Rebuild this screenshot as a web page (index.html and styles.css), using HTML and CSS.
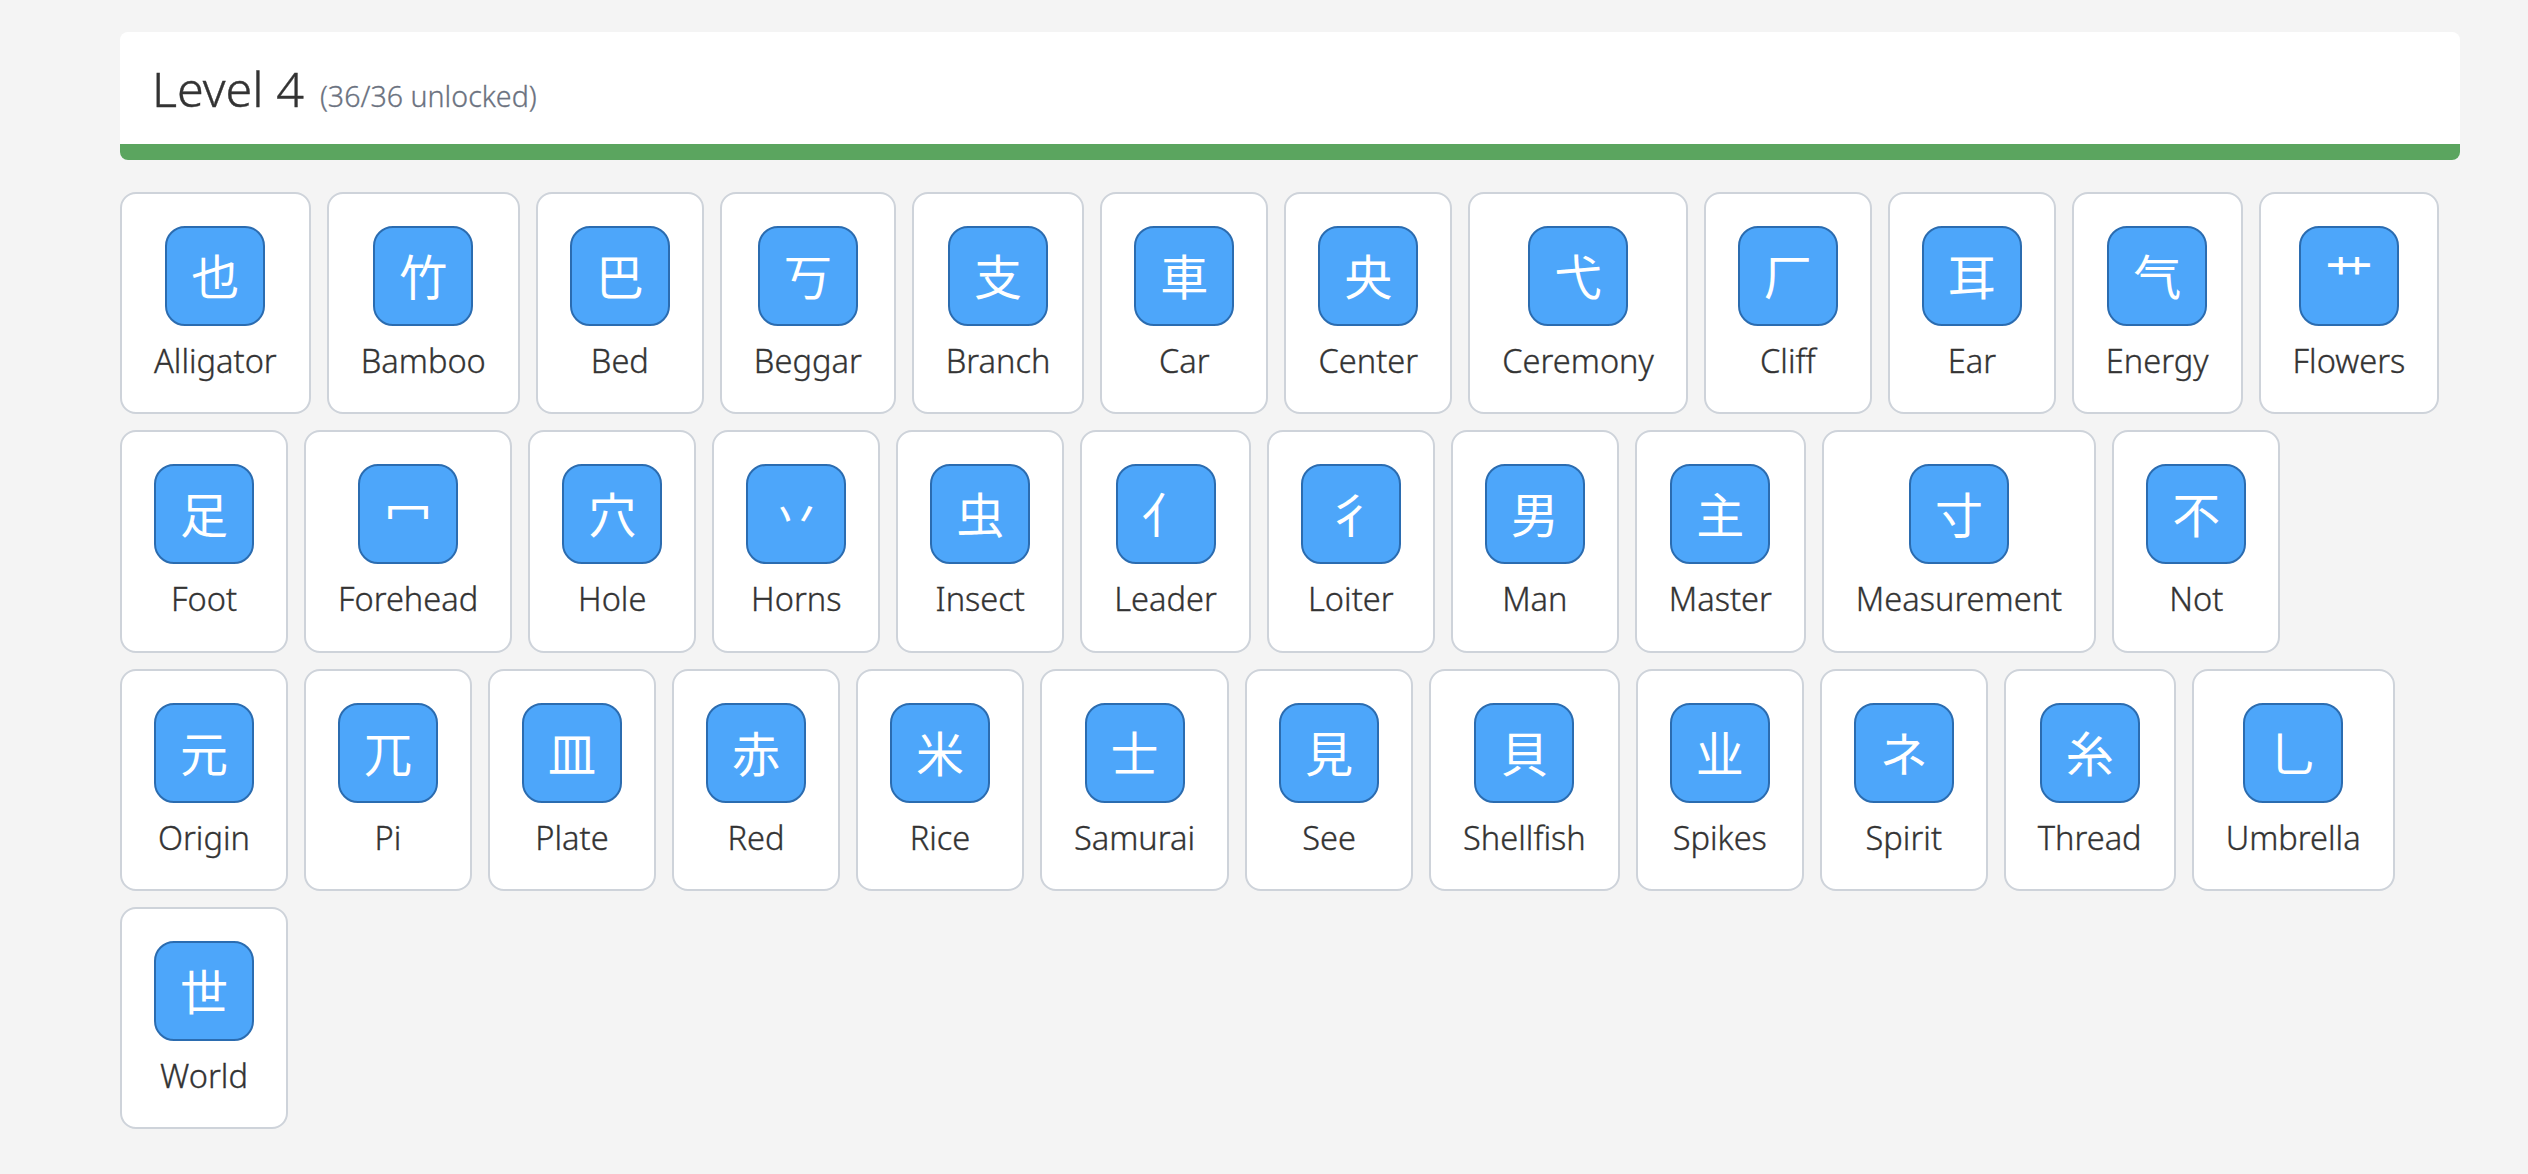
FILE: index.html
```
<!DOCTYPE html>
<html lang="ja">
<head>
<meta charset="utf-8">
<title>Level 4</title>
<link rel="stylesheet" href="styles.css">
</head>
<body>
<main class="page">
<header class="level-card">
<div class="level-head"><h1 class="level-title">Level 4</h1><span class="level-count">(36/36 unlocked)</span></div>
<div class="progress"></div>
</header>
<section class="grid">
<a class="item"><span class="glyph">也</span><span class="name">Alligator</span></a>
<a class="item"><span class="glyph">竹</span><span class="name">Bamboo</span></a>
<a class="item"><span class="glyph">巴</span><span class="name">Bed</span></a>
<a class="item"><span class="glyph">丂</span><span class="name">Beggar</span></a>
<a class="item"><span class="glyph">支</span><span class="name">Branch</span></a>
<a class="item"><span class="glyph">車</span><span class="name">Car</span></a>
<a class="item"><span class="glyph">央</span><span class="name">Center</span></a>
<a class="item"><span class="glyph">弋</span><span class="name">Ceremony</span></a>
<a class="item"><span class="glyph">厂</span><span class="name">Cliff</span></a>
<a class="item"><span class="glyph">耳</span><span class="name">Ear</span></a>
<a class="item"><span class="glyph">气</span><span class="name">Energy</span></a>
<a class="item"><span class="glyph">艹</span><span class="name">Flowers</span></a>
<a class="item"><span class="glyph">足</span><span class="name">Foot</span></a>
<a class="item"><span class="glyph">冖</span><span class="name">Forehead</span></a>
<a class="item"><span class="glyph">穴</span><span class="name">Hole</span></a>
<a class="item"><span class="glyph">丷</span><span class="name">Horns</span></a>
<a class="item"><span class="glyph">虫</span><span class="name">Insect</span></a>
<a class="item"><span class="glyph">亻</span><span class="name">Leader</span></a>
<a class="item"><span class="glyph">彳</span><span class="name">Loiter</span></a>
<a class="item"><span class="glyph">男</span><span class="name">Man</span></a>
<a class="item"><span class="glyph">主</span><span class="name">Master</span></a>
<a class="item"><span class="glyph">寸</span><span class="name">Measurement</span></a>
<a class="item"><span class="glyph">不</span><span class="name">Not</span></a>
<a class="item"><span class="glyph">元</span><span class="name">Origin</span></a>
<a class="item"><span class="glyph">兀</span><span class="name">Pi</span></a>
<a class="item"><span class="glyph">皿</span><span class="name">Plate</span></a>
<a class="item"><span class="glyph">赤</span><span class="name">Red</span></a>
<a class="item"><span class="glyph">米</span><span class="name">Rice</span></a>
<a class="item"><span class="glyph">士</span><span class="name">Samurai</span></a>
<a class="item"><span class="glyph">見</span><span class="name">See</span></a>
<a class="item"><span class="glyph">貝</span><span class="name">Shellfish</span></a>
<a class="item"><span class="glyph">业</span><span class="name">Spikes</span></a>
<a class="item"><span class="glyph">ネ</span><span class="name">Spirit</span></a>
<a class="item"><span class="glyph">糸</span><span class="name">Thread</span></a>
<a class="item"><span class="glyph">乚</span><span class="name">Umbrella</span></a>
<a class="item"><span class="glyph">世</span><span class="name">World</span></a>
</section>
</main>
</body>
</html>
```
FILE: styles.css
```
* { box-sizing: border-box; }
html, body { margin: 0; padding: 0; }
body {
  background: #f4f4f4;
  color: #333;
  font-family: "Noto Sans", "Noto Sans CJK JP", sans-serif;
}
.page { padding: 32px 68px 0 120px; }
.level-card {
  background: #fff;
  border-radius: 8px;
  overflow: hidden;
  margin-bottom: 32px;
}
.level-head {
  display: flex;
  align-items: baseline;
  gap: 16px;
  height: 112px;
  padding: 26px 32px 0;
}
.level-title { margin: 0; font-size: 48.5px; font-weight: 300; line-height: 60px; color: #333; -webkit-text-stroke: 0.4px #333; }
.level-count { font-size: 28.6px; font-weight: 300; color: #6b7280; -webkit-text-stroke: 0.3px #6b7280; }
.progress { height: 16px; background: #5ba55f; }
.grid { display: flex; flex-wrap: wrap; gap: 16px; }
.item {
  display: flex;
  flex-direction: column;
  align-items: center;
  height: 222.3px;
  padding: 32px 32px 0;
  background: #fff;
  border: 2px solid #ced3da;
  border-radius: 16px;
}
.glyph {
  flex: none;
  display: flex;
  align-items: center;
  justify-content: center;
  width: 100px;
  height: 100px;
  padding-bottom: 4px;
  background: #4da6fa;
  border: 2px solid #2b6cb0;
  border-radius: 20px;
  color: #fff;
  font-family: "Noto Sans CJK JP", sans-serif;
  font-size: 48px;
  line-height: 1;
}
.name { margin-top: 14px; font-size: 32.6px; font-weight: 300; line-height: 42px; white-space: nowrap; -webkit-text-stroke: 0.35px #333; }
```
